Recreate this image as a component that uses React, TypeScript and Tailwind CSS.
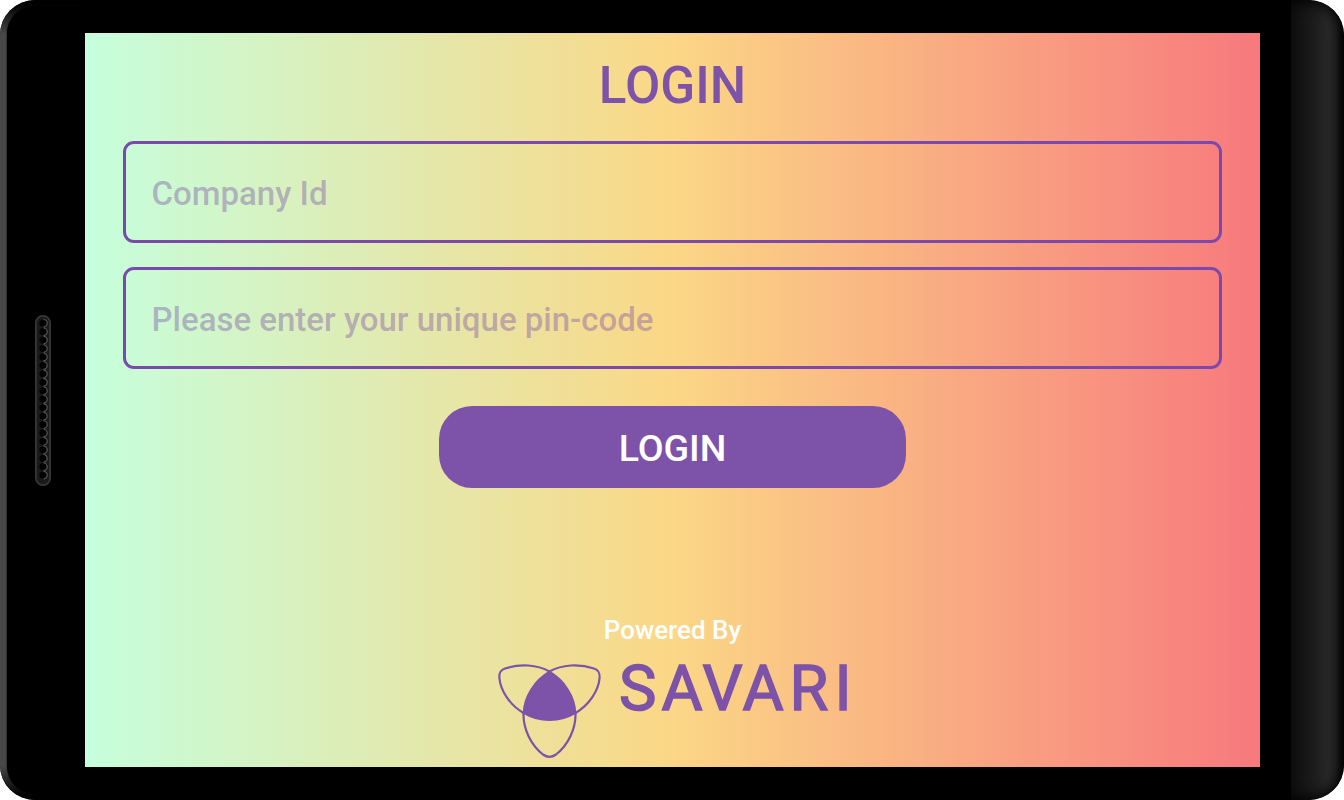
import { useState } from 'react'

const SPEAKER_HOLES = Array.from({ length: 19 }, (_, i) => 8.2 + i * 8.44)

function Speaker() {
  return (
    <svg width="16" height="171" viewBox="0 0 16 171" fill="none">
      <rect x="0.9" y="0.9" width="14.2" height="169.2" rx="7.1" fill="#1a1a1a" stroke="#363636" strokeWidth="1.8" />
      {SPEAKER_HOLES.map((y) => (
        <g key={y}>
          <circle cx="8" cy={y} r="3.6" fill="#000" />
          <path d={`M8.5 ${y - 3.7}A3.7 3.7 0 0 1 8.5 ${y + 3.7}`} stroke="#585858" strokeWidth="1.1" />
        </g>
      ))}
    </svg>
  )
}

function SavariLogo() {
  return (
    <svg width="365" height="114" viewBox="490 645 365 114" fill="none">
      <g stroke="#7d52a9" strokeWidth="2.2">
        <path d="M549.5 671.5C537 664.5 520 663.5 505 668.5C500.5 670 499 672.5 499.4 678C500.5 691 510 705 523.5 713" />
        <path d="M549.5 671.5C562 664.5 579 663.5 594 668.5C598.5 670 600 672.5 599.6 678C598.5 691 589 705 575.5 713" />
        <path d="M523.5 713C523 729 531 745 543 754.5C547.5 757.8 551.5 757.8 556 754.5C568 745 576 729 575.5 713" />
      </g>
      <path
        d="M549.5 671.5C564 680 575 696 575.5 713C560 722.5 539 722.5 523.5 713C524 696 535 680 549.5 671.5Z"
        fill="#7d52a9"
        stroke="#7d52a9"
        strokeWidth="1.5"
      />
      <text
        x="619 661.5 702.5 742.5 789.5 834.5"
        y="710"
        fill="#7d52a9"
        stroke="#7d52a9"
        strokeWidth="1.5"
        fontFamily="Roboto, sans-serif"
        fontSize="63"
        fontWeight="400"
      >
        SAVARI
      </text>
    </svg>
  )
}

function Field({ placeholder, value, onChange }) {
  return (
    <input
      className="block w-full h-[102px] rounded-[11px] border-3 border-[#7b49ab] bg-transparent px-[25.5px] pt-[3px] text-[33px] font-medium text-[#7d52a9] outline-none placeholder:text-[#7d52a9]/43"
      placeholder={placeholder}
      value={value}
      onChange={(e) => onChange(e.target.value)}
    />
  )
}

export default function App() {
  const [companyId, setCompanyId] = useState('')
  const [pin, setPin] = useState('')

  return (
    <div className="h-[800px] w-[1344px] bg-white font-[Roboto,sans-serif]">
      <div className="flex h-full overflow-hidden rounded-[35px] bg-black">
        <div className="w-[85px] shrink-0 bg-[linear-gradient(#000_4px,#484848_34px,#484848_766px,#000_796px)] py-[6px] pl-[7px]">
          <div className="flex h-full items-center rounded-l-[28px] bg-black pl-7 shadow-[0_0_2px_#000]">
            <Speaker />
          </div>
        </div>

        <div className="flex w-[1175px] shrink-0 flex-col bg-black py-[33px]">
          <form
            className="flex h-[734px] flex-col items-center bg-[linear-gradient(90deg,#c5ffdd,#fbd786_50%,#f7797d)] px-[38px]"
            onSubmit={(e) => e.preventDefault()}
          >
            <h1 className="mt-[23px] h-[60px] text-[51.3px] leading-[60px] font-medium text-[#7d52a9]">LOGIN</h1>
            <div className="mt-[25px] flex w-full flex-col gap-6">
              <Field placeholder="Company Id" value={companyId} onChange={setCompanyId} />
              <Field placeholder="Please enter your unique pin-code" value={pin} onChange={setPin} />
            </div>
            <button className="mt-[37px] h-[82px] w-[467px] rounded-[33px] bg-[#7d52a9] pt-[2px] text-[37.5px] font-medium text-white">
              LOGIN
            </button>
            <p className="mt-[126px] h-8 text-[26px] leading-8 font-medium text-white">Powered By</p>
            <div className="-mt-px">
              <SavariLogo />
            </div>
          </form>
        </div>

        <div className="w-[31px] shrink-0 bg-black" />
        <div className="w-[53px] shrink-0 overflow-hidden rounded-r-[35px] bg-[linear-gradient(90deg,#0d0d0d,#191919_35%,#282828_70%,#222_85%,#080808)]">
          <div className="-ml-8 h-full w-[85px] rounded-r-[35px] shadow-[inset_0_0_14px_2px_#000]" />
        </div>
      </div>
    </div>
  )
}
